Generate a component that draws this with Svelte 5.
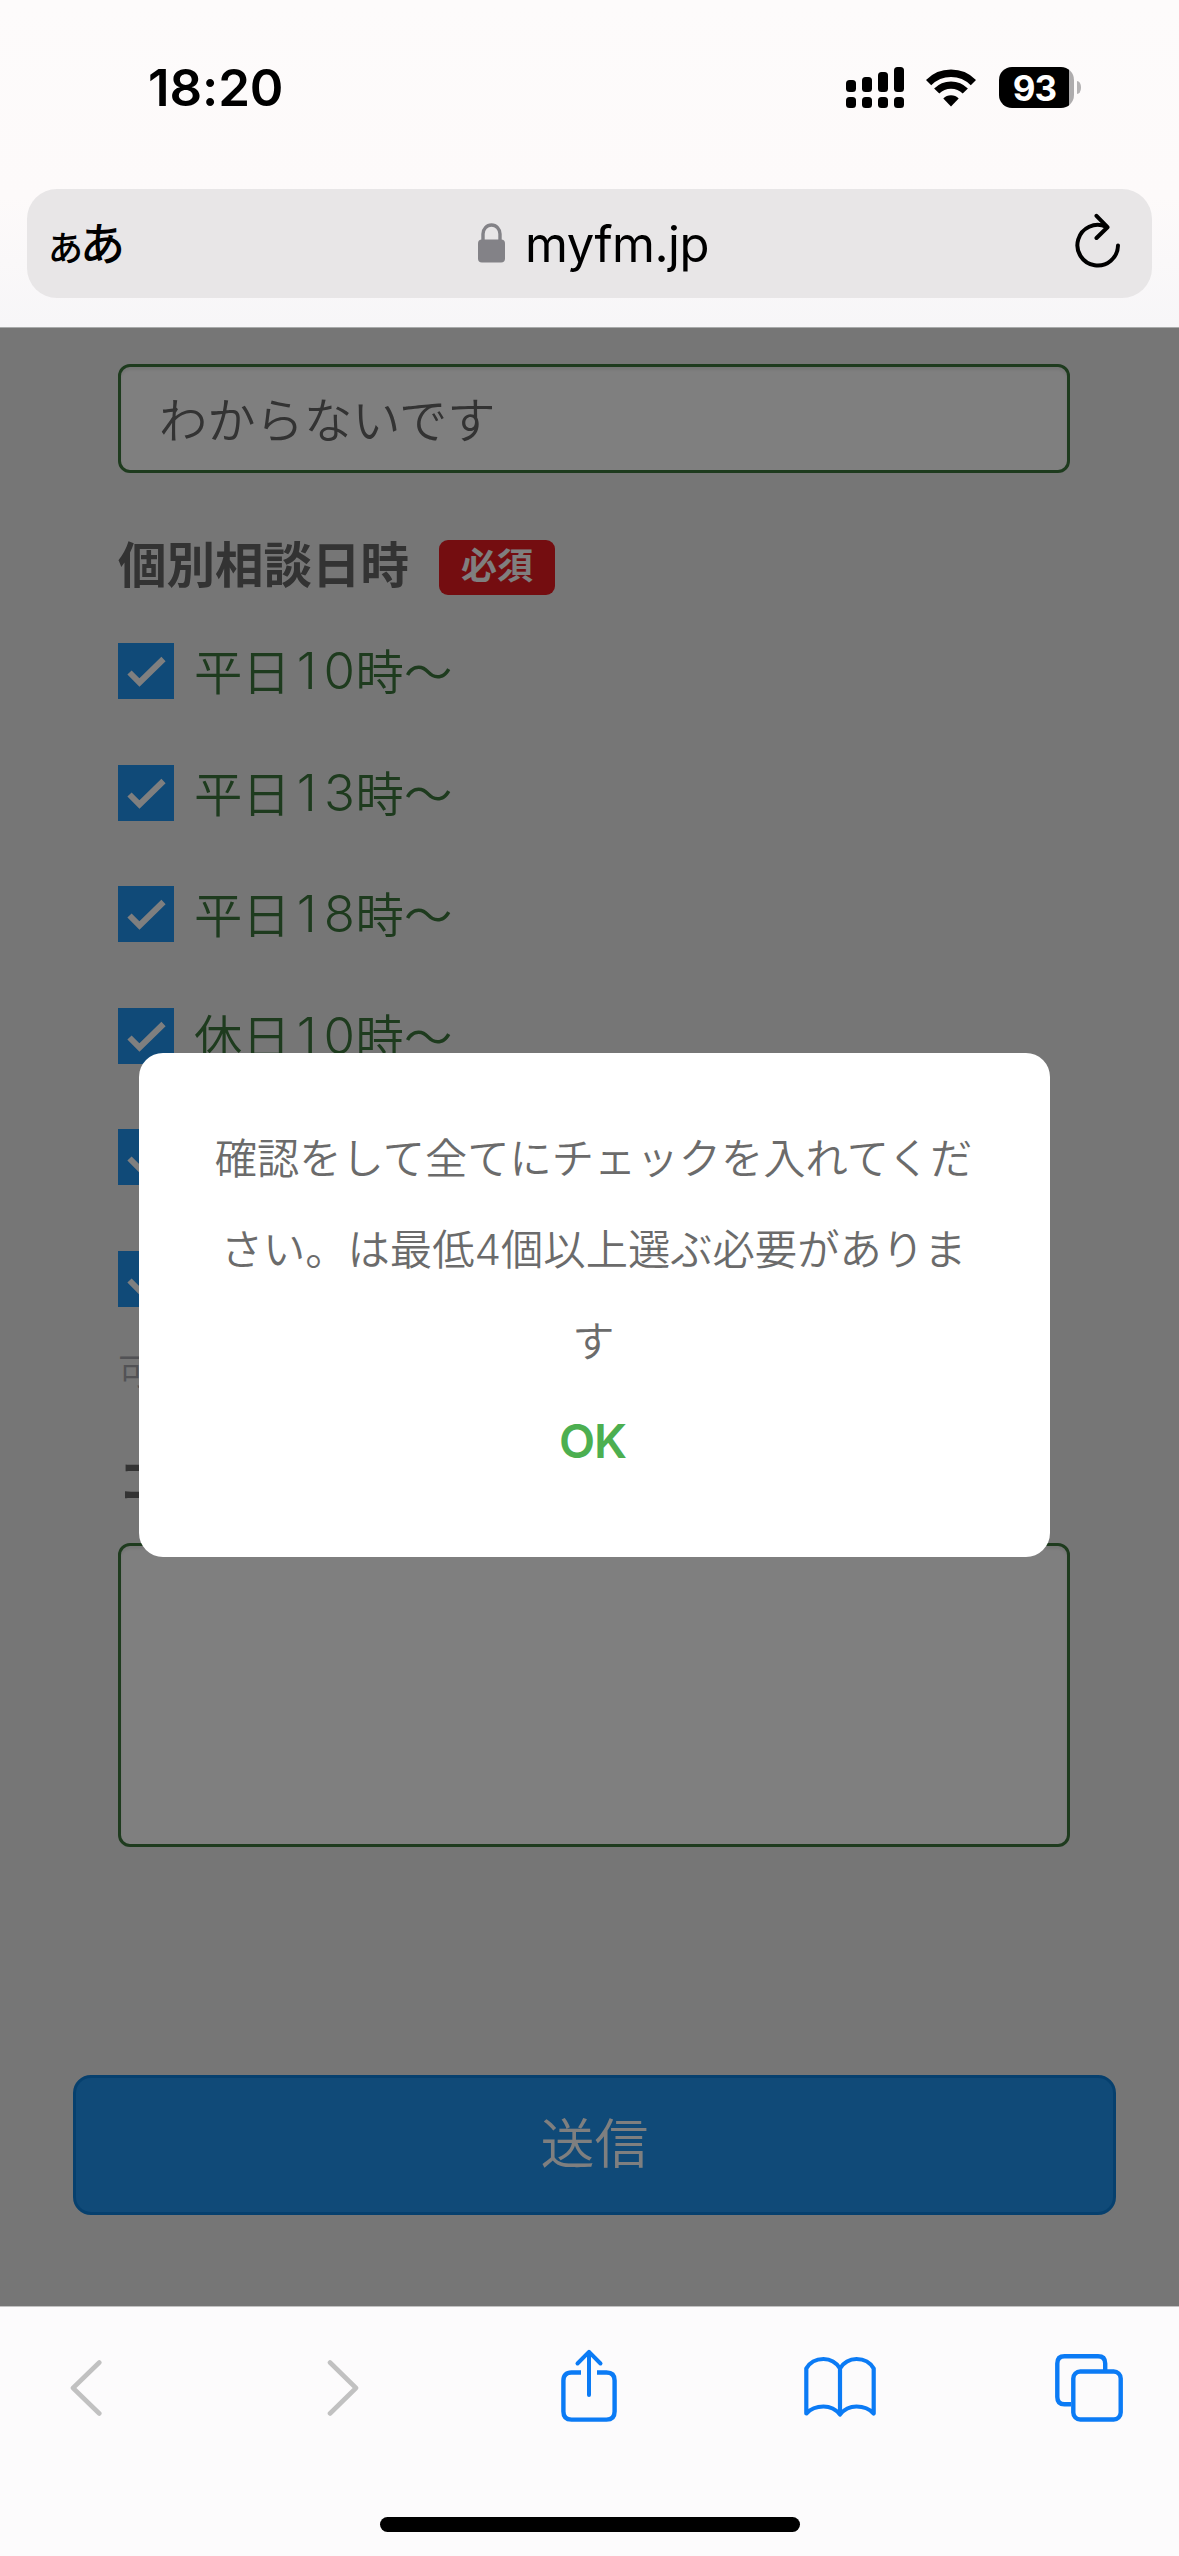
<script>
    let slots = [
        { day: '平日', hour: '10' },
        { day: '平日', hour: '13' },
        { day: '平日', hour: '18' },
        { day: '休日', hour: '10' },
        {},
        {},
    ]
    let bars = [12, 15, 20, 25]
    let answer = 'わからないです'
</script>

<div class="phone">
    <header>
        <div class="status">
            <span class="time">18:20</span>
            <div class="indicators">
                <div class="signal">
                    {#each bars as height}
                        <div class="bar">
                            <i style="height:{height}px"></i>
                            <i class="dot"></i>
                        </div>
                    {/each}
                </div>
                <svg class="wifi" width="50" height="38" viewBox="0 0 50 38">
                    <path d="M2.6 13.6A31.5 31.5 0 0 1 47.4 13.6" fill="none" stroke="#000" stroke-width="7.4" />
                    <path d="M10.7 22.1A20 20 0 0 1 39.3 22.1" fill="none" stroke="#000" stroke-width="7.2" />
                    <path d="M17.3 29.5A11 11 0 0 1 32.7 29.5L25 37.5Z" />
                </svg>
                <div class="battery"><span>93</span></div>
                <i class="knob"></i>
            </div>
        </div>
        <div class="address">
            <div class="reader"><small>あ</small><span>あ</span></div>
            <div class="site">
                <svg width="27" height="40" viewBox="0 0 27 40">
                    <rect x="0" y="16.5" width="27" height="23" rx="4" fill="#838287" />
                    <path d="M5 18V11a8.5 9 0 0 1 17 0V18" fill="none" stroke="#838287" stroke-width="3.4" />
                </svg>
                <span>myfm.jp</span>
            </div>
            <svg class="reload" width="46" height="56" viewBox="0 0 46 56" fill="none" stroke="#000" stroke-width="4" stroke-linecap="round" stroke-linejoin="round">
                <path d="M43 32.5A20.3 20.3 0 1 1 31 13.7" />
                <path d="M21.5 2.8L32.5 14.2L21.5 25" />
            </svg>
        </div>
    </header>

    <main>
        <form>
            <div class="input">{answer}</div>
            <div class="heading"><span>個別相談日時</span><span class="badge">必須</span></div>
            <div class="slots">
                {#each slots as slot}
                    <div class="slot">
                        <div class="check">
                            <svg width="56" height="56" viewBox="0 0 56 56">
                                <path d="M11.5 29.5L21.5 39.5L45.5 16" fill="none" stroke="#fff" stroke-width="6" />
                            </svg>
                        </div>
                        {#if slot.hour}
                            <div class="label">
                                <span>{slot.day}</span>
                                {#each slot.hour as digit}
                                    <b>{digit}</b>
                                {/each}
                                <span>時〜</span>
                            </div>
                        {/if}
                    </div>
                {/each}
            </div>
            <p class="hint">可</p>
            <div class="heading comment">コ</div>
            <div class="textarea"></div>
        </form>
        <div class="submit">送信</div>

        <div class="overlay">
            <div class="modal">
                <p>確認をして全てにチェックを入れてください。は最低4個以上選ぶ必要があります</p>
                <div class="ok">OK</div>
            </div>
        </div>
    </main>

    <footer>
        <nav>
            <svg width="32" height="74" viewBox="0 0 32 74" fill="none" stroke="#c1c1c1" stroke-width="4.6" stroke-linecap="round" stroke-linejoin="round">
                <path d="M29.3 14.5L3 40L29.3 65.5" />
            </svg>
            <svg class="forward" width="32" height="74" viewBox="0 0 32 74" fill="none" stroke="#c1c1c1" stroke-width="4.6" stroke-linecap="round" stroke-linejoin="round">
                <path d="M3 14.5L29 40L3 65.5" />
            </svg>
            <svg class="share" width="56" height="74" viewBox="0 0 56 74" fill="none" stroke="#0b7bf5" stroke-width="4.4">
                <path d="M20 24.5H10.5Q2.4 24.5 2.4 32.5V63.5Q2.4 71.6 10.5 71.6H45.5Q53.6 71.6 53.6 63.5V32.5Q53.6 24.5 45.5 24.5H36" />
                <path d="M28 47V4.5M16.5 15.5L28 3.8L39.5 15.5" stroke-linecap="round" stroke-linejoin="round" stroke-width="4" />
            </svg>
            <svg class="book" width="72" height="74" viewBox="0 0 72 74" fill="none" stroke="#0b7bf5" stroke-width="4.2" stroke-linejoin="round">
                <path d="M36 20.5C32 14 26 11 19.5 11C12 11 6 14 2.3 20.5V65.5C6 61.5 12 58.5 19.5 58.5C26 58.5 32 61.5 36 66.5C40 61.5 46 58.5 52.5 58.5C60 58.5 66 61.5 69.7 65.5V20.5C66 14 60 11 52.5 11C46 11 40 14 36 20.5V66" />
            </svg>
            <svg class="tabs" width="68" height="74" viewBox="0 0 68 74" fill="none" stroke="#0b7bf5" stroke-width="4.4">
                <path d="M50.2 22V15.5Q50.2 8.3 43 8.3H9.5Q2.3 8.3 2.3 15.5V49Q2.3 56.3 9.5 56.3H16" />
                <rect x="18.3" y="23.5" width="47.4" height="48" rx="7" />
            </svg>
        </nav>
        <div class="home"></div>
    </footer>
</div>

<style>
    :global(body) {
        margin: 0;
    }
    .phone {
        display: flex;
        flex-direction: column;
        width: 1179px;
        height: 2556px;
        overflow: hidden;
        color: #000;
        font-family: "Noto Sans CJK JP", sans-serif;
    }
    header {
        box-sizing: border-box;
        height: 328px;
        padding: 0 27px;
        border-bottom: 1px solid #a9abab;
        background: linear-gradient(180deg, #fdfbfb 0%, #fdfafa 60%, #f7f6f8 100%);
    }
    .status {
        display: flex;
        justify-content: space-between;
        align-items: center;
        height: 175px;
        padding: 0 71px 0 121px;
        margin-bottom: 14px;
    }
    .time {
        font: 600 51px Inter, sans-serif;
        letter-spacing: -0.1px;
    }
    .indicators {
        display: flex;
        align-items: center;
    }
    .signal {
        display: flex;
        align-items: flex-end;
        gap: 6px;
        height: 41px;
    }
    .bar {
        display: flex;
        flex-direction: column;
        gap: 5px;
    }
    .bar i {
        width: 10px;
        border-radius: 3.5px;
        background: #000;
    }
    .bar .dot {
        height: 11px;
    }
    .wifi {
        margin-left: 22px;
    }
    .battery {
        display: grid;
        place-items: center;
        box-sizing: border-box;
        width: 75px;
        height: 41px;
        margin-left: 23px;
        padding: 0 4px 2px 0;
        border-radius: 13px;
        background: linear-gradient(90deg, #000 70px, #aeacad 70px);
        color: #fff;
        font: 700 35px Inter, sans-serif;
        letter-spacing: -1px;
    }
    .knob {
        width: 4px;
        height: 13px;
        margin-left: 3px;
        border-radius: 0 4px 4px 0 / 0 6px 6px 0;
        background: #b5b3b4;
    }
    .address {
        display: flex;
        justify-content: space-between;
        align-items: center;
        box-sizing: border-box;
        height: 109px;
        padding: 0 31px 0 21px;
        border-radius: 30px;
        background: #e8e6e7;
    }
    .reader {
        display: flex;
        align-items: baseline;
        width: 150px;
        font-weight: 500;
        line-height: 60px;
    }
    .reader small {
        font-size: 35px;
    }
    .reader span {
        font-size: 45px;
        margin-left: -3px;
    }
    .site {
        display: flex;
        align-items: center;
        gap: 20px;
        margin-right: -14px;
        font: 400 49px/60px Inter, sans-serif;
        letter-spacing: -0.5px;
    }
    .site svg {
        margin-top: -2px;
    }
    .site span {
        margin-top: 2px;
    }
    .reload {
        margin-top: -5px;
        margin-left: 100px;
    }

    main {
        position: relative;
        flex: none;
        height: 1978px;
        background: #ededed;
        color: #666;
    }
    form {
        padding: 36px 109px 0 118px;
    }
    .input, .textarea {
        box-sizing: border-box;
        height: 109px;
        border: 3px solid #3c763d;
        border-radius: 12px;
        background: #fff;
        box-shadow: inset 0 3px 3px rgba(0, 0, 0, 0.075);
    }
    .input {
        padding-left: 38px;
        font-size: 48.3px;
        font-weight: 350;
        line-height: 100px;
    }
    .heading {
        display: flex;
        align-items: flex-start;
        height: 60px;
        margin-top: 62px;
        font-size: 48.5px;
        font-weight: 700;
        line-height: 55px;
    }
    .badge {
        height: 55px;
        margin: 5px 0 0 30px;
        padding: 0 22px;
        border-radius: 9px;
        background: #e91a20;
        color: #fff;
        font-size: 36px;
        font-weight: 700;
        line-height: 46px;
    }
    .slots {
        display: flex;
        flex-direction: column;
        gap: 65.6px;
        margin-top: 48px;
    }
    .slot {
        display: flex;
        align-items: center;
        gap: 20px;
        height: 56px;
    }
    .label {
        display: flex;
        color: #3c763d;
        font-size: 48.3px;
        font-weight: 350;
        line-height: 50px;
    }
    .label b {
        width: 32.5px;
        font: 300 51px/54px Inter, sans-serif;
        text-align: center;
    }
    .check {
        width: 56px;
        height: 56px;
        background: #2094f0;
    }
    .check svg {
        display: block;
    }
    .hint {
        margin: 37px 0 0;
        color: #a4a4aa;
        font-size: 36px;
        font-weight: 350;
        line-height: 50px;
    }
    .comment {
        margin-top: 57px;
    }
    .textarea {
        height: 304px;
        margin-top: 32px;
    }
    .submit {
        box-sizing: border-box;
        height: 140px;
        margin: 228px 63px 0 73px;
        border: 3px solid #0d80dc;
        border-radius: 18px;
        background: #2094f0;
        color: #fff;
        font-size: 54px;
        font-weight: 350;
        line-height: 126px;
        text-align: center;
    }
    .overlay {
        position: absolute;
        inset: 0;
        background: rgba(0, 0, 0, 0.5);
    }
    .modal {
        position: absolute;
        top: 725px;
        left: 139px;
        box-sizing: border-box;
        width: 911px;
        height: 504px;
        padding: 60px 70px 0;
        border-radius: 24px;
        background: #fff;
        color: #6b6b6b;
        text-align: center;
    }
    .modal p {
        margin: 0 1px 0 -1px;
        font-family: Inter, "Noto Sans CJK JP", sans-serif;
        font-size: 42.3px;
        font-weight: 350;
        line-height: 91.3px;
    }
    .ok {
        margin: 26px 2px 0 -2px;
        color: #4caf50;
        font: 600 47px/56px Inter, sans-serif;
        letter-spacing: -1px;
    }

    footer {
        box-sizing: border-box;
        height: 250px;
        border-top: 1px solid #c2c2c2;
        background: #fcfbfc;
    }
    nav {
        display: flex;
        padding: 41px 56px 0 70px;
    }
    .forward {
        margin-left: 225px;
    }
    .share {
        margin-left: 202px;
    }
    .book {
        margin-left: 187px;
    }
    .tabs {
        margin-left: 179px;
    }
    .home {
        width: 420px;
        height: 15px;
        margin: 95px 0 0 380px;
        border-radius: 8px;
        background: #000;
    }
</style>
